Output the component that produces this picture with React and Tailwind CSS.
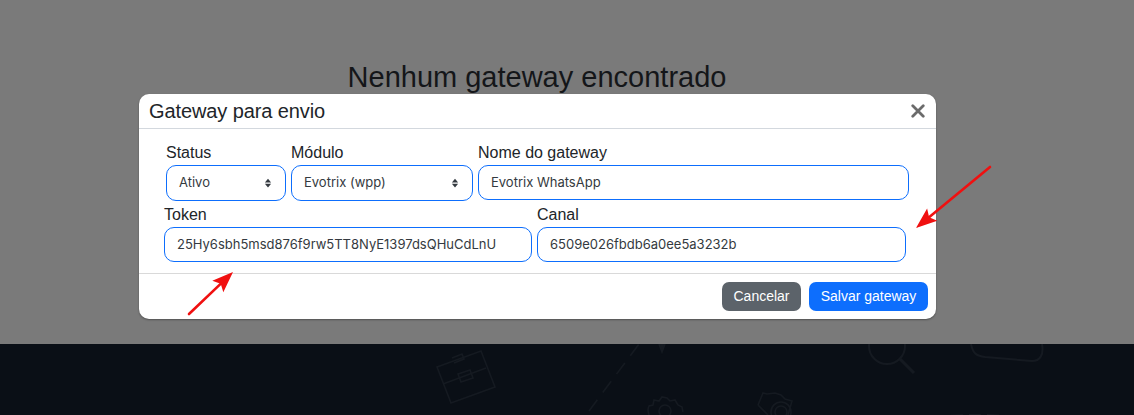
const FONT = "font-['Liberation_Sans',Arial,sans-serif]";

const inputCls =
  "h-[35px] rounded-[10px] border border-[#0d6efd] bg-white pl-3 flex items-center font-['Inter',sans-serif] text-[13px] text-[#343a40] whitespace-nowrap";

function Field({ label, value, className, select, tall }) {
  return (
    <div className={`flex flex-col ${className}`}>
      <label className="text-[16px] leading-[18px] h-[21px] text-[#212529]">{label}</label>
      <div className={`${inputCls} ${tall ? "h-[36px]" : ""} relative`}>
        {value}
        {select && (
          <svg viewBox="0 0 16 16" className="absolute right-[12px] top-1/2 -translate-y-1/2 w-[10px] h-[12px]" fill="#343a40">
            <path d="M8 1l5 6H3zM8 15l-5-6h10z" />
          </svg>
        )}
      </div>
    </div>
  );
}

function Arrow({ x1, y1, x2, y2 }) {
  const a = Math.atan2(y2 - y1, x2 - x1);
  const len = 21;
  const back = (r, w) => [x2 - Math.cos(a) * r - Math.sin(a) * w, y2 - Math.sin(a) * r + Math.cos(a) * w];
  const p1 = back(len, 8);
  const p2 = back(len - 4, 0);
  const p3 = back(len, -8);
  const end = back(len - 6, 0);
  return (
    <>
      <line x1={x1} y1={y1} x2={end[0]} y2={end[1]} stroke="#f01010" strokeWidth="2.6" strokeLinecap="round" />
      <polygon points={`${x2},${y2} ${p1.join(",")} ${p2.join(",")} ${p3.join(",")}`} fill="#f01010" />
    </>
  );
}

export default function App() {
  return (
    <div className={`relative w-[1134px] h-[415px] overflow-hidden ${FONT}`}>
      {/* page behind the backdrop */}
      <div className="h-[344px] bg-[#7a7a7a] flex justify-center pt-[58px] pr-[60px]">
        <h2 className="text-[29px] leading-[38px] text-[#141619]">Nenhum gateway encontrado</h2>
      </div>
      <div className="h-[71px] bg-[#0a0f16]">
        <svg width="1134" height="71" viewBox="0 0 1134 71" fill="none" stroke="#151a21" strokeWidth="1.6">
          <path d="M437 23l44-16 14 36-44 16zM443 40l43-16M458 30l12-4 3 8-12 4zM452 14l10-4 2 5-10 4" />
          <path d="M589 67l50-67" strokeDasharray="14 9" />
          <path d="M659 0l3 8 3-8" fill="#151a21" />
          <circle cx="665" cy="67" r="6" />
          <path d="M649 71c-1-4-2-5 0-9l4-1 1-5 5 1 3-4 5 1 3 3 5-1 3 5 4 2 1 5" />
          <circle cx="887" cy="2" r="18" strokeWidth="2" />
          <path d="M900 15l14 14" strokeWidth="3" />
          <path d="M971 0c2 10 6 12 14 13l47 4c8 0 12-6 10-17" strokeWidth="2" />
          <path d="M758 61l5-12 4 1 8-1 6 2 4 4 7 2-4 14M758 61l10 10" />
          <circle cx="781" cy="68" r="10" />
          <circle cx="781" cy="68" r="6" />
          <path d="M933 73c30-3 60-3 90 0" strokeDasharray="12 6" />
        </svg>
      </div>

      {/* modal */}
      <div className="absolute left-[139px] top-[94px] w-[797px] h-[225px] bg-white rounded-[10px] flex flex-col shadow-[0_1px_2px_rgba(0,0,0,0.35)]">
        <div className="h-[35px] border-b border-[#d3d8de] flex items-center justify-between pl-[10px] pr-[11px]">
          <h5 className="text-[20px] leading-[34px] tracking-[-0.1px] text-[#212529]">Gateway para envio</h5>
          <svg viewBox="0 0 16 16" className="w-[14px] h-[14px]" stroke="#6b6b6b" strokeWidth="3.2" strokeLinecap="round">
            <path d="M2 2l12 12M14 2L2 14" />
          </svg>
        </div>
        <div className="h-[145px] border-b border-[#d9d9d9] pt-[15px]">
          <div className="flex gap-[5px] pl-[27px]">
            <Field label="Status" value="Ativo" select tall className="w-[120px]" />
            <Field label="Módulo" value="Evotrix (wpp)" select tall className="w-[182px]" />
            <Field label="Nome do gateway" value="Evotrix WhatsApp" className="w-[431px]" />
          </div>
          <div className="flex gap-[5px] pl-[25px] pt-[5px]">
            <Field label="Token" value="25Hy6sbh5msd876f9rw5TT8NyE1397dsQHuCdLnU" className="w-[368px]" />
            <Field label="Canal" value="6509e026fbdb6a0ee5a3232b" className="w-[369px]" />
          </div>
        </div>
        <div className="flex justify-end gap-[8px] pt-[8px] pr-[8px]">
          <button className="h-[29px] w-[79px] rounded-[7px] bg-[#5c636a] text-white text-[14px]">Cancelar</button>
          <button className="h-[29px] w-[119px] rounded-[7px] bg-[#0d6efd] text-white text-[14px]">Salvar gateway</button>
        </div>
      </div>

      {/* red annotation arrows */}
      <svg className="absolute inset-0 pointer-events-none" width="1134" height="415">
        <Arrow x1={189} y1={314} x2={233} y2={272} />
        <Arrow x1={990} y1={167} x2={916} y2={228} />
      </svg>
    </div>
  );
}
